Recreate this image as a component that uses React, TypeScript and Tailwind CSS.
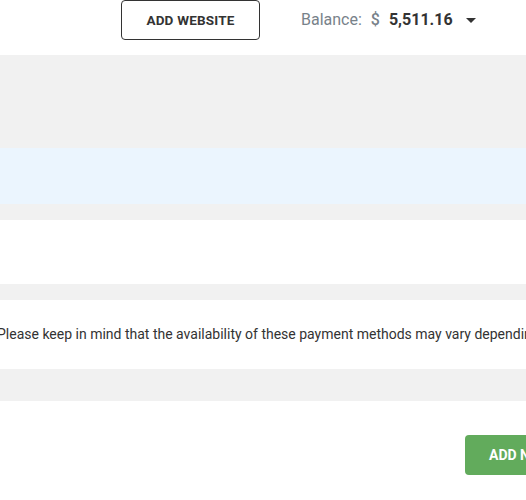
import React from "react";

export default function App() {
  return (
    <div
      className="w-[526px] h-[500px] overflow-hidden bg-white"
      style={{ fontFamily: "Roboto, 'Liberation Sans', sans-serif" }}
    >
      {/* header */}
      <div className="h-[55px] flex items-start">
        <div className="ml-[121px] mt-0 w-[139px] h-[40px] border border-[#333] rounded-[4px] flex items-center justify-center text-[13.5px] font-bold text-[#333] tracking-[0.2px]">
          ADD WEBSITE
        </div>
        <div className="ml-[41px] h-[40px] flex items-center text-[16px]">
          <span className="text-[#78828a]">Balance:</span>
          <span className="ml-[9px] text-[#78828a] font-medium">$</span>
          <span className="ml-[9px] font-bold text-[#333]">5,511.16</span>
          <svg className="ml-[13px]" width="10" height="5" viewBox="0 0 10 5">
            <path d="M0 0 L10 0 L5 5 Z" fill="#333" />
          </svg>
        </div>
      </div>
      {/* gray */}
      <div className="h-[93px] bg-[#f1f1f1]" />
      {/* blue */}
      <div className="h-[56px] bg-[#ebf5fe]" />
      <div className="h-[16px] bg-[#f1f1f1]" />
      <div className="h-[64px] bg-white" />
      <div className="h-[16px] bg-[#f1f1f1]" />
      <div className="h-[69px] bg-white flex items-center overflow-hidden">
        <p className="ml-[-3px] shrink-0 whitespace-nowrap text-[14px] text-[#333]">
          Please keep in mind that the availability of these payment methods may vary depending on your location.
        </p>
      </div>
      <div className="h-[32px] bg-[#f1f1f1]" />
      <div className="flex justify-start pt-[34px]">
        <div className="ml-[465px] w-[120px] h-[40px] shrink-0 bg-[#62ab5c] rounded-[4px] flex items-center pl-[24px] text-[14px] font-bold text-white whitespace-nowrap">
          ADD NEW
        </div>
      </div>
    </div>
  );
}
